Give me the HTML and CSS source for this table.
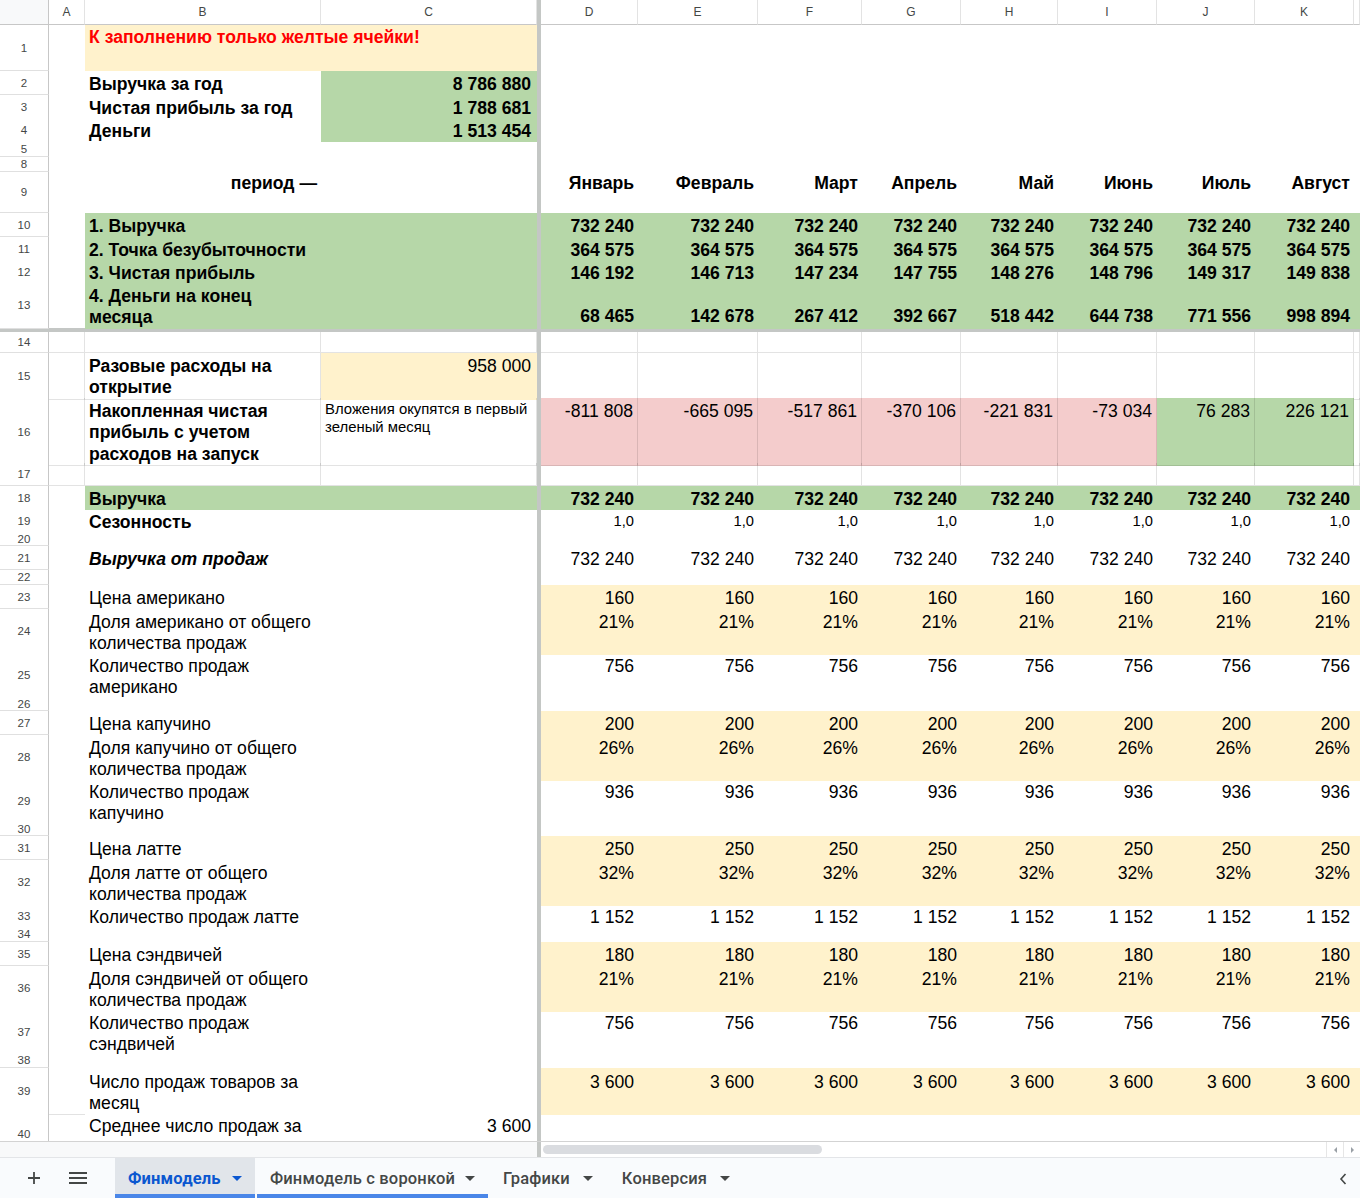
FILE: index.html
```html
<!DOCTYPE html>
<html lang="ru">
<head>
<meta charset="utf-8">
<title>Финмодель</title>
<link rel="stylesheet" href="styles.css">
</head>
<body>
<div class="app">
<div class="sheet">
  <div class="r hdr">
    <div class="corner"></div><div>A</div><div>B</div><div>C</div><div class="fz"></div><div>D</div><div>E</div><div>F</div><div>G</div><div>H</div><div>I</div><div>J</div><div>K</div><div></div>
  </div>

  <div class="r h46"><div class="rh">1</div><div></div><div class="c span2 yl red b">К заполнению только желтые ячейки!</div><div class="fz"></div></div>
  <div class="r h24"><div class="rh">2</div><div></div><div class="c b">Выручка за год</div><div class="c b n gr cc">8 786 880</div><div class="fz"></div></div>
  <div class="r h23"><div class="rh">3</div><div></div><div class="c b">Чистая прибыль за год</div><div class="c b n gr cc">1 788 681</div><div class="fz"></div></div>
  <div class="r h23"><div class="rh">4</div><div></div><div class="c b">Деньги</div><div class="c b n gr cc">1 513 454</div><div class="fz"></div></div>
  <div class="r h16"><div class="rh">5</div><div></div><div></div><div></div><div class="fz"></div></div>
  <div class="r h15"><div class="rh">8</div><div></div><div></div><div></div><div class="fz"></div></div>
  <div class="r h41 r9"><div class="rh">9</div><div></div><div class="c b n">период —</div><div></div><div class="fz"></div>
    <div class="c b n">Январь</div><div class="c b n">Февраль</div><div class="c b n">Март</div><div class="c b n">Апрель</div><div class="c b n">Май</div><div class="c b n">Июнь</div><div class="c b n">Июль</div><div class="c b n">Август</div></div>

  <div class="r h24"><div class="rh">10</div><div></div><div class="c b gr">1. Выручка</div><div class="gr"></div><div class="fz"></div>
    <div class="c b n gr">732 240</div><div class="c b n gr">732 240</div><div class="c b n gr">732 240</div><div class="c b n gr">732 240</div><div class="c b n gr">732 240</div><div class="c b n gr">732 240</div><div class="c b n gr">732 240</div><div class="c b n gr">732 240</div><div class="gr"></div></div>
  <div class="r h23"><div class="rh">11</div><div></div><div class="c b gr">2. Точка безубыточности</div><div class="gr"></div><div class="fz"></div>
    <div class="c b n gr">364 575</div><div class="c b n gr">364 575</div><div class="c b n gr">364 575</div><div class="c b n gr">364 575</div><div class="c b n gr">364 575</div><div class="c b n gr">364 575</div><div class="c b n gr">364 575</div><div class="c b n gr">364 575</div><div class="gr"></div></div>
  <div class="r h23"><div class="rh">12</div><div></div><div class="c b gr">3. Чистая прибыль</div><div class="gr"></div><div class="fz"></div>
    <div class="c b n gr">146 192</div><div class="c b n gr">146 713</div><div class="c b n gr">147 234</div><div class="c b n gr">147 755</div><div class="c b n gr">148 276</div><div class="c b n gr">148 796</div><div class="c b n gr">149 317</div><div class="c b n gr">149 838</div><div class="gr"></div></div>
  <div class="r h45"><div class="rh">13</div><div></div><div class="c b gr">4. Деньги на конец<br>месяца</div><div class="gr"></div><div class="fz"></div>
    <div class="c b n gr l2">68 465</div><div class="c b n gr l2">142 678</div><div class="c b n gr l2">267 412</div><div class="c b n gr l2">392 667</div><div class="c b n gr l2">518 442</div><div class="c b n gr l2">644 738</div><div class="c b n gr l2">771 556</div><div class="c b n gr l2">998 894</div><div class="gr"></div></div>

  <div class="hfz"></div>

  <div class="r h21"><div class="rh">14</div><div class="g"></div><div class="g"></div><div class="g"></div><div class="fz"></div>
    <div class="g"></div><div class="g"></div><div class="g"></div><div class="g"></div><div class="g"></div><div class="g"></div><div class="g"></div><div class="g"></div><div class="g"></div></div>
  <div class="r h45"><div class="rh">15</div><div class="g"></div><div class="c b g">Разовые расходы на<br>открытие</div><div class="c n yl cc">958 000</div><div class="fz"></div>
    <div class="g"></div><div class="g"></div><div class="g"></div><div class="g"></div><div class="g"></div><div class="g"></div><div class="g"></div><div class="g"></div><div class="g"></div></div>
  <div class="r h65"><div class="rh">16</div><div class="g"></div><div class="c b g">Накопленная чистая<br>прибыль с учетом<br>расходов на запуск</div><div class="c note g">Вложения окупятся в первый<br>зеленый месяц</div><div class="fz"></div>
    <div class="c n pk g">-811 808</div><div class="c n pk g">-665 095</div><div class="c n pk g">-517 861</div><div class="c n pk g">-370 106</div><div class="c n pk g">-221 831</div><div class="c n pk g">-73 034</div><div class="c n gr g">76 283</div><div class="c n gr g">226 121</div><div class="g"></div></div>
  <div class="r h23"><div class="rh">17</div><div class="g"></div><div class="g"></div><div class="g"></div><div class="fz"></div>
    <div class="g"></div><div class="g"></div><div class="g"></div><div class="g"></div><div class="g"></div><div class="g"></div><div class="g"></div><div class="g"></div><div class="g"></div></div>

  <div class="r h23"><div class="rh">18</div><div></div><div class="c b gr">Выручка</div><div class="gr"></div><div class="fz"></div>
    <div class="c b n gr">732 240</div><div class="c b n gr">732 240</div><div class="c b n gr">732 240</div><div class="c b n gr">732 240</div><div class="c b n gr">732 240</div><div class="c b n gr">732 240</div><div class="c b n gr">732 240</div><div class="c b n gr">732 240</div><div class="gr"></div></div>
  <div class="r h23"><div class="rh">19</div><div></div><div class="c b">Сезонность</div><div></div><div class="fz"></div>
    <div class="c n sm">1,0</div><div class="c n sm">1,0</div><div class="c n sm">1,0</div><div class="c n sm">1,0</div><div class="c n sm">1,0</div><div class="c n sm">1,0</div><div class="c n sm">1,0</div><div class="c n sm">1,0</div></div>
  <div class="r h14"><div class="rh">20</div><div></div><div></div><div></div><div class="fz"></div></div>
  <div class="r h24"><div class="rh">21</div><div></div><div class="c b i">Выручка от продаж</div><div></div><div class="fz"></div>
    <div class="c n">732 240</div><div class="c n">732 240</div><div class="c n">732 240</div><div class="c n">732 240</div><div class="c n">732 240</div><div class="c n">732 240</div><div class="c n">732 240</div><div class="c n">732 240</div></div>
  <div class="r h15"><div class="rh">22</div><div></div><div></div><div></div><div class="fz"></div></div>

  <div class="r h24"><div class="rh">23</div><div></div><div class="c">Цена американо</div><div></div><div class="fz"></div>
    <div class="c n yl">160</div><div class="c n yl">160</div><div class="c n yl">160</div><div class="c n yl">160</div><div class="c n yl">160</div><div class="c n yl">160</div><div class="c n yl">160</div><div class="c n yl">160</div><div class="yl"></div></div>
  <div class="r h44"><div class="rh">24</div><div></div><div class="c">Доля американо от общего<br>количества продаж</div><div></div><div class="fz"></div>
    <div class="c n yl">21%</div><div class="c n yl">21%</div><div class="c n yl">21%</div><div class="c n yl">21%</div><div class="c n yl">21%</div><div class="c n yl">21%</div><div class="c n yl">21%</div><div class="c n yl">21%</div><div class="yl"></div></div>
  <div class="r h44"><div class="rh">25</div><div></div><div class="c">Количество продаж<br>американо</div><div></div><div class="fz"></div>
    <div class="c n">756</div><div class="c n">756</div><div class="c n">756</div><div class="c n">756</div><div class="c n">756</div><div class="c n">756</div><div class="c n">756</div><div class="c n">756</div></div>
  <div class="r h14"><div class="rh">26</div><div></div><div></div><div></div><div class="fz"></div></div>

  <div class="r h24"><div class="rh">27</div><div></div><div class="c">Цена капучино</div><div></div><div class="fz"></div>
    <div class="c n yl">200</div><div class="c n yl">200</div><div class="c n yl">200</div><div class="c n yl">200</div><div class="c n yl">200</div><div class="c n yl">200</div><div class="c n yl">200</div><div class="c n yl">200</div><div class="yl"></div></div>
  <div class="r h44"><div class="rh">28</div><div></div><div class="c">Доля капучино от общего<br>количества продаж</div><div></div><div class="fz"></div>
    <div class="c n yl">26%</div><div class="c n yl">26%</div><div class="c n yl">26%</div><div class="c n yl">26%</div><div class="c n yl">26%</div><div class="c n yl">26%</div><div class="c n yl">26%</div><div class="c n yl">26%</div><div class="yl"></div></div>
  <div class="r h43"><div class="rh">29</div><div></div><div class="c">Количество продаж<br>капучино</div><div></div><div class="fz"></div>
    <div class="c n">936</div><div class="c n">936</div><div class="c n">936</div><div class="c n">936</div><div class="c n">936</div><div class="c n">936</div><div class="c n">936</div><div class="c n">936</div></div>
  <div class="r h14"><div class="rh">30</div><div></div><div></div><div></div><div class="fz"></div></div>

  <div class="r h24"><div class="rh">31</div><div></div><div class="c">Цена латте</div><div></div><div class="fz"></div>
    <div class="c n yl">250</div><div class="c n yl">250</div><div class="c n yl">250</div><div class="c n yl">250</div><div class="c n yl">250</div><div class="c n yl">250</div><div class="c n yl">250</div><div class="c n yl">250</div><div class="yl"></div></div>
  <div class="r h44"><div class="rh">32</div><div></div><div class="c">Доля латте от общего<br>количества продаж</div><div></div><div class="fz"></div>
    <div class="c n yl">32%</div><div class="c n yl">32%</div><div class="c n yl">32%</div><div class="c n yl">32%</div><div class="c n yl">32%</div><div class="c n yl">32%</div><div class="c n yl">32%</div><div class="c n yl">32%</div><div class="yl"></div></div>
  <div class="r h23"><div class="rh">33</div><div></div><div class="c">Количество продаж латте</div><div></div><div class="fz"></div>
    <div class="c n">1 152</div><div class="c n">1 152</div><div class="c n">1 152</div><div class="c n">1 152</div><div class="c n">1 152</div><div class="c n">1 152</div><div class="c n">1 152</div><div class="c n">1 152</div></div>
  <div class="r h15"><div class="rh">34</div><div></div><div></div><div></div><div class="fz"></div></div>

  <div class="r h24"><div class="rh">35</div><div></div><div class="c">Цена сэндвичей</div><div></div><div class="fz"></div>
    <div class="c n yl">180</div><div class="c n yl">180</div><div class="c n yl">180</div><div class="c n yl">180</div><div class="c n yl">180</div><div class="c n yl">180</div><div class="c n yl">180</div><div class="c n yl">180</div><div class="yl"></div></div>
  <div class="r h44"><div class="rh">36</div><div></div><div class="c">Доля сэндвичей от общего<br>количества продаж</div><div></div><div class="fz"></div>
    <div class="c n yl">21%</div><div class="c n yl">21%</div><div class="c n yl">21%</div><div class="c n yl">21%</div><div class="c n yl">21%</div><div class="c n yl">21%</div><div class="c n yl">21%</div><div class="c n yl">21%</div><div class="yl"></div></div>
  <div class="r h43"><div class="rh">37</div><div></div><div class="c">Количество продаж<br>сэндвичей</div><div></div><div class="fz"></div>
    <div class="c n">756</div><div class="c n">756</div><div class="c n">756</div><div class="c n">756</div><div class="c n">756</div><div class="c n">756</div><div class="c n">756</div><div class="c n">756</div></div>
  <div class="r h15"><div class="rh">38</div><div></div><div></div><div></div><div class="fz"></div></div>

  <div class="r h44"><div class="rh">39</div><div class="gb"></div><div class="c p25">Число продаж товаров за<br>месяц</div><div></div><div class="fz"></div>
    <div class="c n yl p25">3 600</div><div class="c n yl p25">3 600</div><div class="c n yl p25">3 600</div><div class="c n yl p25">3 600</div><div class="c n yl p25">3 600</div><div class="c n yl p25">3 600</div><div class="c n yl p25">3 600</div><div class="c n yl p25">3 600</div><div class="yl"></div></div>
  <div class="r h44"><div class="rh rh40">40</div><div></div><div class="c p25">Среднее число продаж за</div><div class="c n p25 cc">3 600</div><div class="fz"></div></div>
</div>

<div class="hscroll">
  <div class="hs-left"></div>
  <div class="hs-fz"></div>
  <div class="hs-track"><div class="thumb"></div></div>
  <div class="hs-btn"><span class="tri-l"></span></div>
  <div class="hs-btn"><span class="tri-r"></span></div>
</div>

<div class="tabs">
  <div class="tb-ico">
    <svg width="14" height="14" viewBox="0 0 14 14"><path d="M7 1v12M1 7h12" stroke="#444746" stroke-width="1.8" fill="none"/></svg>
  </div>
  <div class="tb-ico">
    <svg width="18" height="12" viewBox="0 0 18 12"><path d="M0 1h18M0 6h18M0 11h18" stroke="#444746" stroke-width="1.8" fill="none"/></svg>
  </div>
  <div class="tab active">Финмодель<span class="caret"></span></div>
  <div class="tab colored">Финмодель с воронкой<span class="caret"></span></div>
  <div class="tab">Графики<span class="caret"></span></div>
  <div class="tab">Конверсия<span class="caret"></span></div>
  <div class="spacer"></div>
  <div class="chev">
    <svg width="10" height="14" viewBox="0 0 10 14"><path d="M7.5 2L3 7l4.5 5" stroke="#444746" stroke-width="1.6" fill="none"/></svg>
  </div>
</div>
</div>
</body>
</html>
```

FILE: styles.css
```css
* { box-sizing: border-box; margin: 0; padding: 0; }
html, body { width: 1360px; height: 1198px; overflow: hidden; background: #fff; }
body { font-family: "Liberation Sans", Arial, sans-serif; color: #000; }

.app { display: flex; flex-direction: column; height: 1198px; }
.sheet { height: 1141px; overflow: hidden; flex: none; }

.r {
  display: grid;
  grid-template-columns: 49px 36px 236px 216px 4px 97px 120px 104px 99px 97px 99px 98px 99px 6px;
}
.h14 { height: 14px; } .h15 { height: 15px; } .h16 { height: 16px; }
.h21 { height: 21px; } .h23 { height: 23px; } .h24 { height: 24px; }
.h41 { height: 41px; } .h43 { height: 43px; } .h44 { height: 44px; }
.h45 { height: 45px; } .h46 { height: 46px; } .h65 { height: 65px; }

/* column header */
.hdr { height: 25px; }
.hdr > div {
  border-right: 1px solid #e3e3e3;
  border-bottom: 1px solid #c7c7c7;
  font-size: 12px;
  color: #444746;
  display: flex; align-items: center; justify-content: center;
  background: #fff;
}
.hdr > .corner { background: #f8f9fa; border-right: 1px solid #c7c7c7; }
.hdr > .fz { background: #c4c7c5; border: none; }

/* row header */
.rh {
  border-right: 1px solid #c7c7c7;
  border-bottom: 1px solid #e0e0e0;
  font-size: 11.5px;
  color: #444746;
  display: flex; align-items: center; justify-content: center;
  background: #fff;
}
.rh40 { align-items: flex-start; padding-top: 16px; }

.fz { background: #c4c7c5; }
.hfz { height: 4px; background: #c4c7c5; }

/* cells */
.c {
  font-size: 17.6px;
  line-height: 21.5px;
  padding: 2.5px 4px 0;
  white-space: nowrap;
}
.r9 .c { padding-top: 0.5px; }
.n { text-align: right; }
.cc { padding-right: 6px; }
.b { font-weight: bold; }
.i { font-style: italic; }
.red { color: #ff0000; }
.sm { font-size: 14.7px; padding-top: 2px; }
.note { font-size: 14.9px; line-height: 18px; padding: 1.5px 4px 0; }
.l2 { padding-top: 23px; }
.p25 { padding-top: 3.5px; }
.span2 { grid-column: span 2; padding-top: 2px; }

.yl { background: #fff2cc; }
.gr { background: #b6d7a8; }
.pk { background: #f4cccc; }

.g { border-right: 1px solid rgba(0,0,0,0.11); border-bottom: 1px solid rgba(0,0,0,0.11); }
.gb { border-bottom: 1px solid #e2e2e2; }

/* horizontal scrollbar strip */
.hscroll {
  height: 16px;
  flex: none;
  display: flex;
  border-top: 1px solid #d3d3d3;
  background: #fff;
}
.hs-left { width: 537px; background: #f8f9fa; }
.hs-fz { width: 4px; background: #c4c7c5; }
.hs-track { flex: 1; position: relative; }
.thumb {
  position: absolute; left: 2px; top: 3px;
  width: 279px; height: 9px;
  border-radius: 5px;
  background: #dadce0;
}
.hs-btn {
  width: 17px;
  border-left: 1px solid #e6e6e6;
  display: flex; align-items: center; justify-content: center;
}
.tri-l { width: 0; height: 0; border-top: 3px solid transparent; border-bottom: 3px solid transparent; border-right: 3px solid #9aa0a6; }
.tri-r { width: 0; height: 0; border-top: 3px solid transparent; border-bottom: 3px solid transparent; border-left: 3px solid #9aa0a6; }

/* sheet tabs */
.tabs {
  flex: 1;
  display: flex;
  align-items: stretch;
  background: #f9fbfd;
  border-top: 1px solid #e3e5e8;
  font-family: Roboto, "Liberation Sans", sans-serif;
}
.tb-ico { display: flex; align-items: center; justify-content: center; }
.tb-ico:nth-child(1) { width: 44px; margin-left: 12px; }
.tb-ico:nth-child(2) { width: 44px; margin-right: 15px; }
.tab {
  display: flex; align-items: center;
  padding: 0 13px;
  font-size: 16.5px;
  font-weight: 500;
  color: #444746;
  border-bottom: 4px solid transparent;
  padding-top: 4px;
  letter-spacing: 0.15px;
}
.tab.active { width: 140px; background: #e1e5ea; color: #0b57d0; font-weight: 700; border-bottom-color: #4a86e8; }
.tab.colored { width: 231px; margin-left: 2px; border-bottom-color: #4a86e8; }
.tab:nth-child(5) { margin-left: 2px; }
.tab:nth-child(6) { margin-left: 3px; }
.caret {
  width: 0; height: 0;
  border-left: 5px solid transparent; border-right: 5px solid transparent;
  border-top: 5px solid #444746;
  margin-left: 13px;
}
.tab.active .caret { border-top-color: #0b57d0; margin-left: auto; }
.tab.colored .caret { margin-left: auto; }
.spacer { flex: 1; }
.chev { width: 34px; display: flex; align-items: center; justify-content: center; padding-top: 2px; }
```
